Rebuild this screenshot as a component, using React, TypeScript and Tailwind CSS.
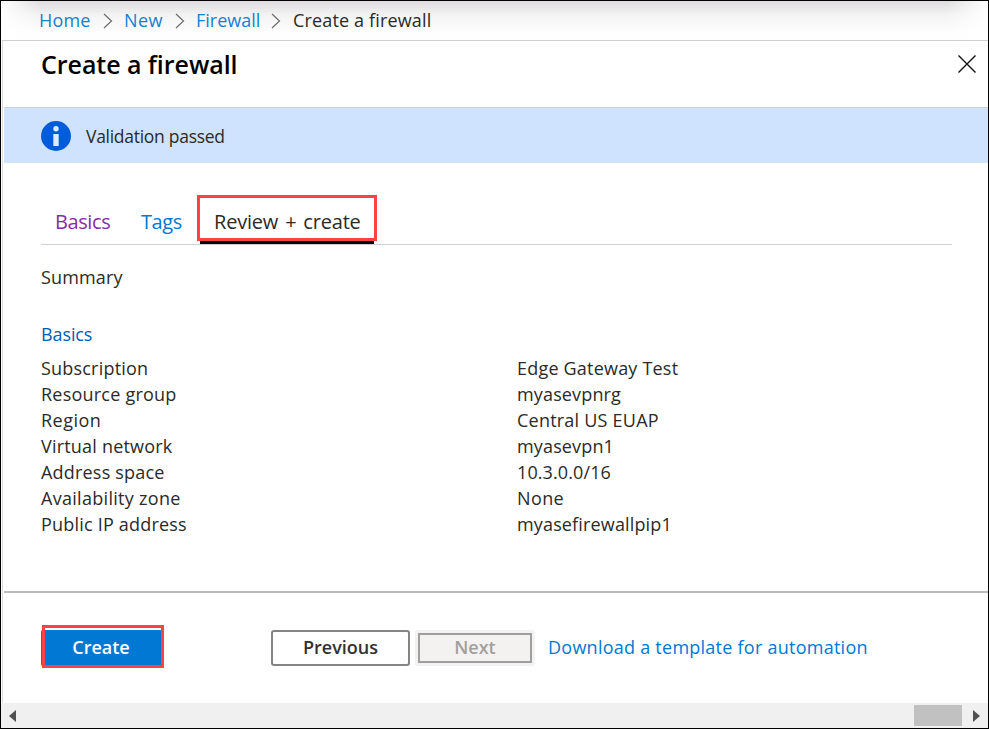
import React from "react";

const rows: [string, string, string, string][] = [
  ["Subscription", "tracking-[0.2px]", "Edge Gateway Test", "tracking-[0.2px]"],
  ["Resource group", "tracking-[0.22px]", "myasevpnrg", "tracking-[0.15px]"],
  ["Region", "tracking-[0.5px]", "Central US EUAP", "tracking-[0.22px]"],
  ["Virtual network", "tracking-[0.2px]", "myasevpn1", "tracking-[0.15px]"],
  ["Address space", "tracking-[0.2px]", "10.3.0.0/16", "tracking-[0.1px]"],
  ["Availability zone", "tracking-[0.3px]", "None", "tracking-[0.4px]"],
  ["Public IP address", "tracking-[0.2px]", "myasefirewallpip1", "tracking-[0.15px]"],
];

function Chevron() {
  return (
    <svg width="10" height="16" viewBox="0 0 10 16" fill="none" stroke="#6b6b6b" strokeWidth="1.2" className="-ml-px mr-px shrink-0">
      <path d="M1 1l7.5 7-7.5 7" />
    </svg>
  );
}

export default function App() {
  return (
    <div className="flex h-[729px] w-[989px] flex-col overflow-hidden border border-black bg-white font-['Open_Sans','Noto_Sans',sans-serif] text-[18px] text-[#2b2a29]">
      <nav className="flex h-[39px] shrink-0 items-center bg-[linear-gradient(to_right,white,transparent_40px,transparent_945px,white),linear-gradient(to_bottom,#dedcde,#f3f3f3_14px,#fefefe_32px)] pl-[38px] leading-[38px] whitespace-nowrap text-[#1580d3]">
        <span className="-mt-[2px] w-[65px] tracking-[0.2px]">Home</span>
        <Chevron />
        <span className="-mt-[2px] ml-[10px] w-[52px] tracking-[0.4px]">New</span>
        <Chevron />
        <span className="-mt-[2px] ml-[10px] w-[76px]">Firewall</span>
        <Chevron />
        <span className="-mt-[2px] ml-[11px] tracking-[0.15px] text-[#2b2a29]">Create a firewall</span>
      </nav>
      <div className="ml-px flex min-h-0 flex-1 flex-col border-t border-l border-t-[#d2d0ce] border-l-[#dedad8] pl-px">
        <header className="flex h-[67px] shrink-0 items-start justify-between border-b border-[#d2d0ce] pr-[11px] pl-[37px]">
          <h1 className="mt-[6px] text-[25px] leading-[34px] font-semibold tracking-[-0.05px] text-black">Create a firewall</h1>
          <svg width="20" height="20" viewBox="0 0 20 20" stroke="#111" strokeWidth="1.4" className="mt-[13px]">
            <path d="M1.5 1.5l17 17M18.5 1.5l-17 17" />
          </svg>
        </header>
        <div className="flex h-[55px] shrink-0 items-center bg-[#cfe3ff] pl-[37px]">
          <svg width="30" height="30" viewBox="0 0 30 30">
            <circle cx="15" cy="15" r="15" fill="#015cda" />
            <circle cx="15" cy="7.7" r="2.7" fill="#dcebff" />
            <path d="M12.3 13h5.4v12h-5.4z" fill="#dcebff" />
          </svg>
          <span className="mt-[2px] ml-[15px] text-[17.5px] tracking-[-0.28px]">Validation passed</span>
        </div>
        <main className="flex h-[428px] shrink-0 flex-col pl-[37px]">
          <div className="mt-[32px] flex h-[50px] w-[911px] border-b border-[#d0d0d0] text-[20px] leading-[54px] whitespace-nowrap">
            <span className="w-[100px] pl-[14px] tracking-[-0.4px] text-[#8a2da5]">Basics</span>
            <span className="w-[56px] tracking-[-0.4px] text-[#0078d4]">Tags</span>
            <div className="h-[49px] w-[180px]">
              <div className="h-[46px] border-[3px] border-[#fb4346] pl-[14px] leading-[48px] tracking-[-0.2px] [word-spacing:2px]">Review + create</div>
              <div className="ml-[3px] h-[3px] w-[174px] bg-black" />
            </div>
          </div>
          <h2 className="mt-[19px] leading-[26px] tracking-[0.15px]">Summary</h2>
          <h3 className="mt-[31px] leading-[26px] tracking-[-0.1px] text-[#015cb3]">Basics</h3>
          <dl className="mt-[8px] leading-[26px]">
            {rows.map(([k, a, v, b]) => (
              <div key={k} className="flex h-[26px]">
                <dt className={"w-[476px] " + a}>{k}</dt>
                <dd className={b}>{v}</dd>
              </div>
            ))}
          </dl>
        </main>
        <footer className="flex flex-1 items-start border-t-2 border-[#bababa] pl-[37px]">
          <div className="relative mt-[37px] h-[36px] w-[122px]">
            <button className="h-[36px] w-[121px] rounded-[2px] bg-[#0078d4] pr-px pb-[2px] font-semibold text-white">Create</button>
            <div className="absolute -top-[5px] left-px h-[43px] w-[122px] border-[3px] border-[#fb4346]" />
          </div>
          <button className="mt-[37px] ml-[108px] h-[36px] w-[139px] rounded-[3px] border-2 border-[#858483] pb-[2px] font-semibold text-[#323130]">Previous</button>
          <div className="mt-[37px] ml-[5px] h-[36px] w-[120px] rounded-[3px] bg-[#f3f2f1] p-[3px]">
            <button className="h-[30px] w-[114px] border-2 border-[#a19f9d] pb-[2px] leading-[24px] font-semibold text-[#a19f9d]">Next</button>
          </div>
          <a className="mt-[37px] ml-[13px] leading-[34px] tracking-[0.25px] text-[#0078d4]">Download a template for automation</a>
        </footer>
      </div>
      <div className="flex h-[25px] shrink-0 items-center bg-[#f0f0f0]">
        <svg width="7" height="12" viewBox="0 0 7 12" className="ml-[8px]"><path d="M7 0v12L0 6z" fill="#505050" /></svg>
        <div className="ml-auto h-[21px] w-[48px] bg-[#c1c1c1]" />
        <svg width="7" height="12" viewBox="0 0 7 12" className="mr-[8px] ml-[11px]"><path d="M0 0v12l7-6z" fill="#505050" /></svg>
      </div>
    </div>
  );
}
